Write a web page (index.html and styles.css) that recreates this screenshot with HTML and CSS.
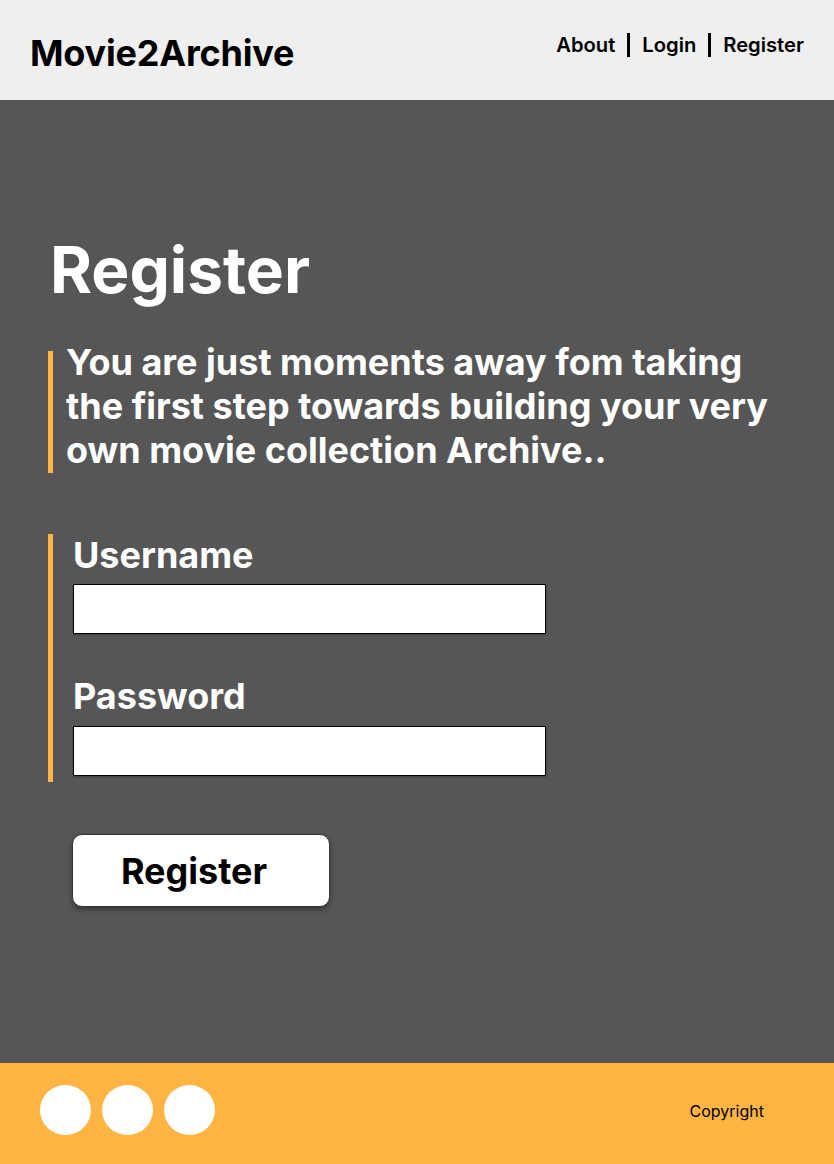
FILE: index.html
```html
<!DOCTYPE html>
<html lang="en">
<head>
<meta charset="utf-8">
<title>Movie2Archive - Register</title>
<link rel="stylesheet" href="styles.css">
</head>
<body>
<header class="site-header">
  <div class="logo">Movie2Archive</div>
  <nav class="nav">
    <a href="#">About</a>
    <span class="sep"></span>
    <a href="#">Login</a>
    <span class="sep"></span>
    <a href="#">Register</a>
  </nav>
</header>
<main class="main">
  <h1 class="title">Register</h1>
  <div class="lede">
    <p class="lede-text">You are just moments away fom taking the first step towards building your very own movie collection Archive..</p>
  </div>
  <form class="form">
    <div class="fields">
      <label class="label" for="u">Username</label>
      <input class="input" id="u" type="text">
      <label class="label label-2" for="p">Password</label>
      <input class="input" id="p" type="password">
    </div>
    <button class="btn" type="button">Register</button>
  </form>
</main>
<footer class="footer">
  <div class="socials">
    <span class="dot"></span>
    <span class="dot"></span>
    <span class="dot"></span>
  </div>
  <div class="copy">Copyright</div>
</footer>
</body>
</html>
```
FILE: styles.css
```css
* { box-sizing: border-box; }
html, body { margin: 0; padding: 0; }
body {
  font-family: Inter, "Noto Sans", sans-serif;
  width: 834px;
  height: 1164px;
  display: flex;
  flex-direction: column;
}
.site-header {
  height: 100px;
  background: #efefef;
  display: flex;
  justify-content: space-between;
  align-items: flex-start;
  padding: 0 30px 0 30px;
  flex-shrink: 0;
}
.logo {
  font-size: 36px;
  font-weight: 700;
  color: #000;
  margin-top: 31px;
  letter-spacing: -0.2px;
}
.nav {
  display: flex;
  align-items: center;
  margin-top: 33px;
  gap: 12px;
}
.nav a {
  color: #000;
  text-decoration: none;
  font-size: 20.2px;
  font-weight: 600;
  line-height: 24px;
}
.sep {
  width: 3px;
  height: 24px;
  background: #000;
}
.main {
  flex: 1;
  background: #565656;
  padding: 131px 40px 0 48px;
}
.title {
  margin: 0 0 0 2px;
  font-size: 64px;
  font-weight: 700;
  color: #fff;
  line-height: 78px;
}
.lede {
  display: flow-root;
  margin-top: 42px;
  border-left: 5px solid #ffb443;
  padding: 0 0 1px 13px;
}
.lede-text {
  margin: -11px 0 0 0;
  font-size: 36px;
  font-weight: 700;
  line-height: 44px;
  color: #fff;
  max-width: 716px;
}
.form {
  margin-top: 61px;
}
.fields {
  border-left: 5px solid #ffb443;
  padding: 1px 0 6px 20px;
  display: flex;
  flex-direction: column;
  align-items: flex-start;
}
.label {
  font-size: 36px;
  font-weight: 700;
  color: #fff;
  line-height: 40px;
  margin-bottom: 9px;
}
.label-2 { margin-top: 42px; margin-bottom: 10px; }
.input {
  width: 473px;
  height: 50px;
  border: 1px solid #000;
  background: #fff;
  box-shadow: 0 1px 2px rgba(0,0,0,0.3);
  margin: 0;
}
.btn {
  margin: 52px 0 0 24px;
  width: 258px;
  height: 73px;
  background: #fff;
  border: 1px solid #333;
  border-radius: 10px;
  box-shadow: 0 3px 5px rgba(0,0,0,0.35);
  font-family: Inter, "Noto Sans", sans-serif;
  font-size: 36px;
  font-weight: 700;
  color: #000;
  padding: 0 14px 0 0;
}
.footer {
  height: 101px;
  background: #ffb443;
  display: flex;
  align-items: flex-start;
  justify-content: space-between;
  padding: 0 70px 0 40px;
  flex-shrink: 0;
}
.socials {
  display: flex;
  gap: 11px;
  margin-top: 22px;
}
.dot {
  width: 51px;
  height: 50px;
  border-radius: 50%;
  background: #fff;
}
.copy {
  font-size: 16px;
  line-height: 19px;
  color: #000;
  margin-top: 39px;
}
```
